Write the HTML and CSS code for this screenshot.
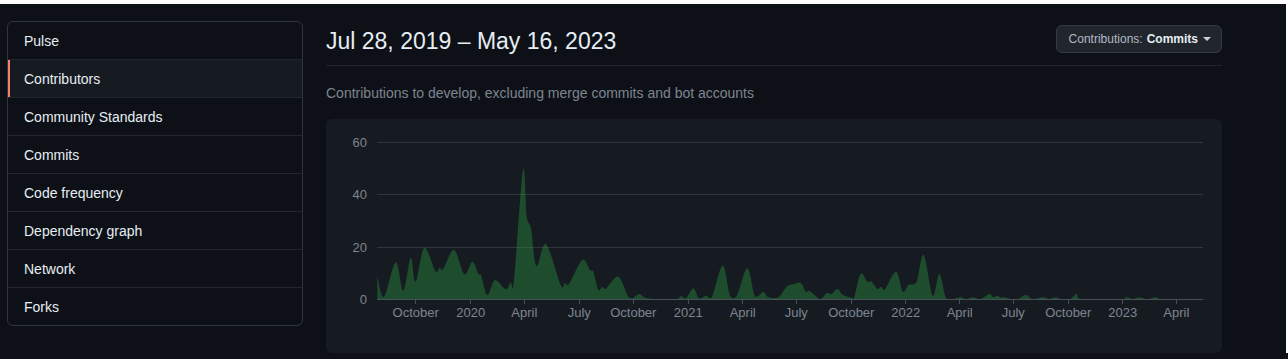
FILE: index.html
```html
<!DOCTYPE html>
<html lang="en">
<head>
    <meta charset="UTF-8">
    <meta name="viewport" content="width=device-width, initial-scale=1.0">
    <title>Contributors</title>
    <link rel="stylesheet" href="styles.css">
</head>
<body>
    <div class="layout">
        <nav class="sidebar">
            <a href="#">Pulse</a>
            <a href="#" class="selected">Contributors</a>
            <a href="#">Community Standards</a>
            <a href="#">Commits</a>
            <a href="#">Code frequency</a>
            <a href="#">Dependency graph</a>
            <a href="#">Network</a>
            <a href="#">Forks</a>
        </nav>

        <main class="main">
            <div class="subhead">
                <h1>Jul 28, 2019 – May 16, 2023</h1>
                <button class="select-btn">
                    <span class="select-label">Contributions:</span> <strong>Commits</strong>
                    <span class="caret"></span>
                </button>
            </div>
            <p class="subtitle">Contributions to develop, excluding merge commits and bot accounts</p>

            <div class="chart">
                <svg width="896" height="234" viewBox="0 0 896 234">
                    <g class="grid">
                        <line x1="51" y1="23.5" x2="877" y2="23.5"/>
                        <line x1="51" y1="75.5" x2="877" y2="75.5"/>
                        <line x1="51" y1="128.5" x2="877" y2="128.5"/>
                    </g>
                    <path id="area" class="area" d=""/>
                    <g class="axis">
                        <line x1="51" y1="180.5" x2="877" y2="180.5"/>
                        <line x1="89.5" y1="180" x2="89.5" y2="185"/>
                        <line x1="144.5" y1="180" x2="144.5" y2="185"/>
                        <line x1="198.5" y1="180" x2="198.5" y2="185"/>
                        <line x1="253.5" y1="180" x2="253.5" y2="185"/>
                        <line x1="307.5" y1="180" x2="307.5" y2="185"/>
                        <line x1="362.5" y1="180" x2="362.5" y2="185"/>
                        <line x1="416.5" y1="180" x2="416.5" y2="185"/>
                        <line x1="470.5" y1="180" x2="470.5" y2="185"/>
                        <line x1="525.5" y1="180" x2="525.5" y2="185"/>
                        <line x1="579.5" y1="180" x2="579.5" y2="185"/>
                        <line x1="633.5" y1="180" x2="633.5" y2="185"/>
                        <line x1="687.5" y1="180" x2="687.5" y2="185"/>
                        <line x1="742.5" y1="180" x2="742.5" y2="185"/>
                        <line x1="796.5" y1="180" x2="796.5" y2="185"/>
                        <line x1="850.5" y1="180" x2="850.5" y2="185"/>
                    </g>
                    <g class="y-labels">
                        <text x="41" y="28">60</text>
                        <text x="41" y="80">40</text>
                        <text x="41" y="133">20</text>
                        <text x="41" y="185">0</text>
                    </g>
                    <g class="x-labels">
                        <text x="89.7" y="198">October</text>
                        <text x="144.7" y="198">2020</text>
                        <text x="198.3" y="198">April</text>
                        <text x="253.3" y="198">July</text>
                        <text x="307.3" y="198">October</text>
                        <text x="362.3" y="198">2021</text>
                        <text x="416.7" y="198">April</text>
                        <text x="470.3" y="198">July</text>
                        <text x="525.3" y="198">October</text>
                        <text x="579.7" y="198">2022</text>
                        <text x="633.7" y="198">April</text>
                        <text x="687.3" y="198">July</text>
                        <text x="742.3" y="198">October</text>
                        <text x="796.7" y="198">2023</text>
                        <text x="850.3" y="198">April</text>
                    </g>
                </svg>
            </div>
        </main>
    </div>

    <script>
        // weekly commits, already in chart pixels (x, y); baseline is y = 180.3
        const base = 180.3;
        const points = [
            [51.3,157],[58,177.7],[69.7,143.3],[77.3,171.7],[84.7,138.7],[89.7,162.7],
            [98.3,128.7],[109.3,152],[113.7,148.7],[117.3,150],[128,131],[138.3,155.3],
            [146.3,142.7],[152.3,155],[155,156.3],[161.3,176],[169,161],[179.7,170.3],
            [184.7,163.3],[188,161],[197,51],[200.7,97.7],[205,109.3],[210.3,147],
            [220,125.3],[234.7,166],[239,163.7],[243,165],[256.3,141],[264,151],
            [267.3,152.7],[272.3,171],[276.3,167.7],[280,169.7],[292.3,157.7],[302.3,177.7],
            [307.3,178.7],[313,175],[319,178.7],[325.7,179.7],[330,180.3],[350,180.3],
            [355,177],[360,179.3],[367.3,169.3],[373,179.3],[380,176.7],[385.7,178.7],
            [396.7,146.7],[404,176.7],[410.7,177],[421.3,149.3],[429,177],[437.3,173],
            [441.7,177.7],[452.3,178.3],[460.7,167.7],[467.3,165.3],[475,164.3],[479.7,172.7],
            [484,172],[494,180],[500.7,174.3],[505.7,175],[511.3,170],[517,176],
            [525.7,178.7],[528,179],[534.7,155],[541.3,162.7],[545.7,162.7],[551.3,170],
            [555,167.7],[559,170.3],[570,152.7],[576.7,172.7],[582.3,166],[587.3,165.3],
            [591.3,161],[597.7,136],[606.7,176.7],[613.3,155],[620,179.3],[626,180.3],
            [634.7,178.3],[640,180.3],[646.7,178.3],[654,180.3],[663.3,175],[667,178],
            [671.3,176.7],[675,178.5],[679,178.3],[686,180.3],[692,180.3],[699.7,176],
            [707,180.3],[717.3,178.3],[723,180],[730,178.3],[736,180.3],[744,180.3],
            [750.7,175],[756,180.3],[794,180.3],[800.7,178.3],[807,180],[813.3,178.3],
            [821,180.3],[830,178.3],[837,180.3],[877,180.3]
        ];

        function buildArea(pts) {
            let d = `M${pts[0][0]} ${base} L${pts[0][0]} ${pts[0][1]}`;
            for (let i = 0; i < pts.length - 1; i++) {
                const p0 = pts[i - 1] || pts[i];
                const p1 = pts[i];
                const p2 = pts[i + 1];
                const p3 = pts[i + 2] || p2;
                const c1x = p1[0] + (p2[0] - p0[0]) / 6;
                const c1y = Math.min(base, p1[1] + (p2[1] - p0[1]) / 6);
                const c2x = p2[0] - (p3[0] - p1[0]) / 6;
                const c2y = Math.min(base, p2[1] - (p3[1] - p1[1]) / 6);
                d += ` C${c1x.toFixed(1)} ${c1y.toFixed(1)} ${c2x.toFixed(1)} ${c2y.toFixed(1)} ${p2[0]} ${p2[1]}`;
            }
            return d + ` L${pts[pts.length - 1][0]} ${base} Z`;
        }

        document.getElementById("area").setAttribute("d", buildArea(points));
    </script>
</body>
</html>
```

FILE: styles.css
```css
body {
    margin: 0;
    background-color: #0d1117;
    border-top: 4px solid #ffffff;
    border-right: 2px solid #ffffff;
    font-family: "Liberation Sans", Arial, sans-serif;
    color: #e6edf3;
}

.layout {
    display: flex;
    align-items: flex-start;
    gap: 23px;
    padding: 17px 0 0 7px;
}

.sidebar {
    width: 296px;
    box-sizing: border-box;
    border: 1px solid #30363d;
    border-radius: 6px;
    overflow: hidden;
}

.sidebar a {
    display: block;
    padding: 9px 16px 7px;
    font-size: 14px;
    line-height: 21px;
    color: #e6edf3;
    text-decoration: none;
    border-top: 1px solid #21262d;
}

.sidebar a:first-child {
    border-top: none;
}

.sidebar a.selected {
    background-color: #161b22;
    box-shadow: inset 2px 0 0 #f78166;
}

.main {
    width: 896px;
}

.subhead {
    display: flex;
    align-items: flex-start;
    padding-bottom: 7px;
    border-bottom: 1px solid #21262d;
}

.subhead h1 {
    margin: 3px 0 0;
    font-size: 23px;
    font-weight: normal;
    line-height: 34px;
}

.select-btn {
    margin: 4px 0 0 auto;
    height: 28px;
    box-sizing: border-box;
    padding: 0 10px 0 12px;
    display: flex;
    align-items: center;
    gap: 4px;
    background-color: #21262d;
    border: 1px solid #363b42;
    border-radius: 6px;
    font-family: inherit;
    font-size: 12px;
    color: #e6edf3;
    cursor: pointer;
    white-space: pre;
}

.select-label {
    color: #b1bac4;
}

.caret {
    width: 0;
    height: 0;
    margin-left: 1px;
    border-left: 4px solid transparent;
    border-right: 4px solid transparent;
    border-top: 4px solid #c9d1d9;
}

.subtitle {
    margin: 17px 0 15px;
    font-size: 14px;
    line-height: 21px;
    color: #7d8590;
}

.chart {
    background-color: #161b22;
    border-radius: 6px;
    height: 234px;
}

.chart svg {
    display: block;
}

.grid line {
    stroke: #30363d;
    stroke-width: 1;
}

.axis line {
    stroke: #484f58;
    stroke-width: 1;
}

.area {
    fill: #2ea043;
    fill-opacity: 0.38;
}

.y-labels text,
.x-labels text {
    font-family: "Liberation Sans", Arial, sans-serif;
    font-size: 13px;
    fill: #7d8590;
}

.y-labels text {
    text-anchor: end;
}

.x-labels text {
    text-anchor: middle;
}
```
